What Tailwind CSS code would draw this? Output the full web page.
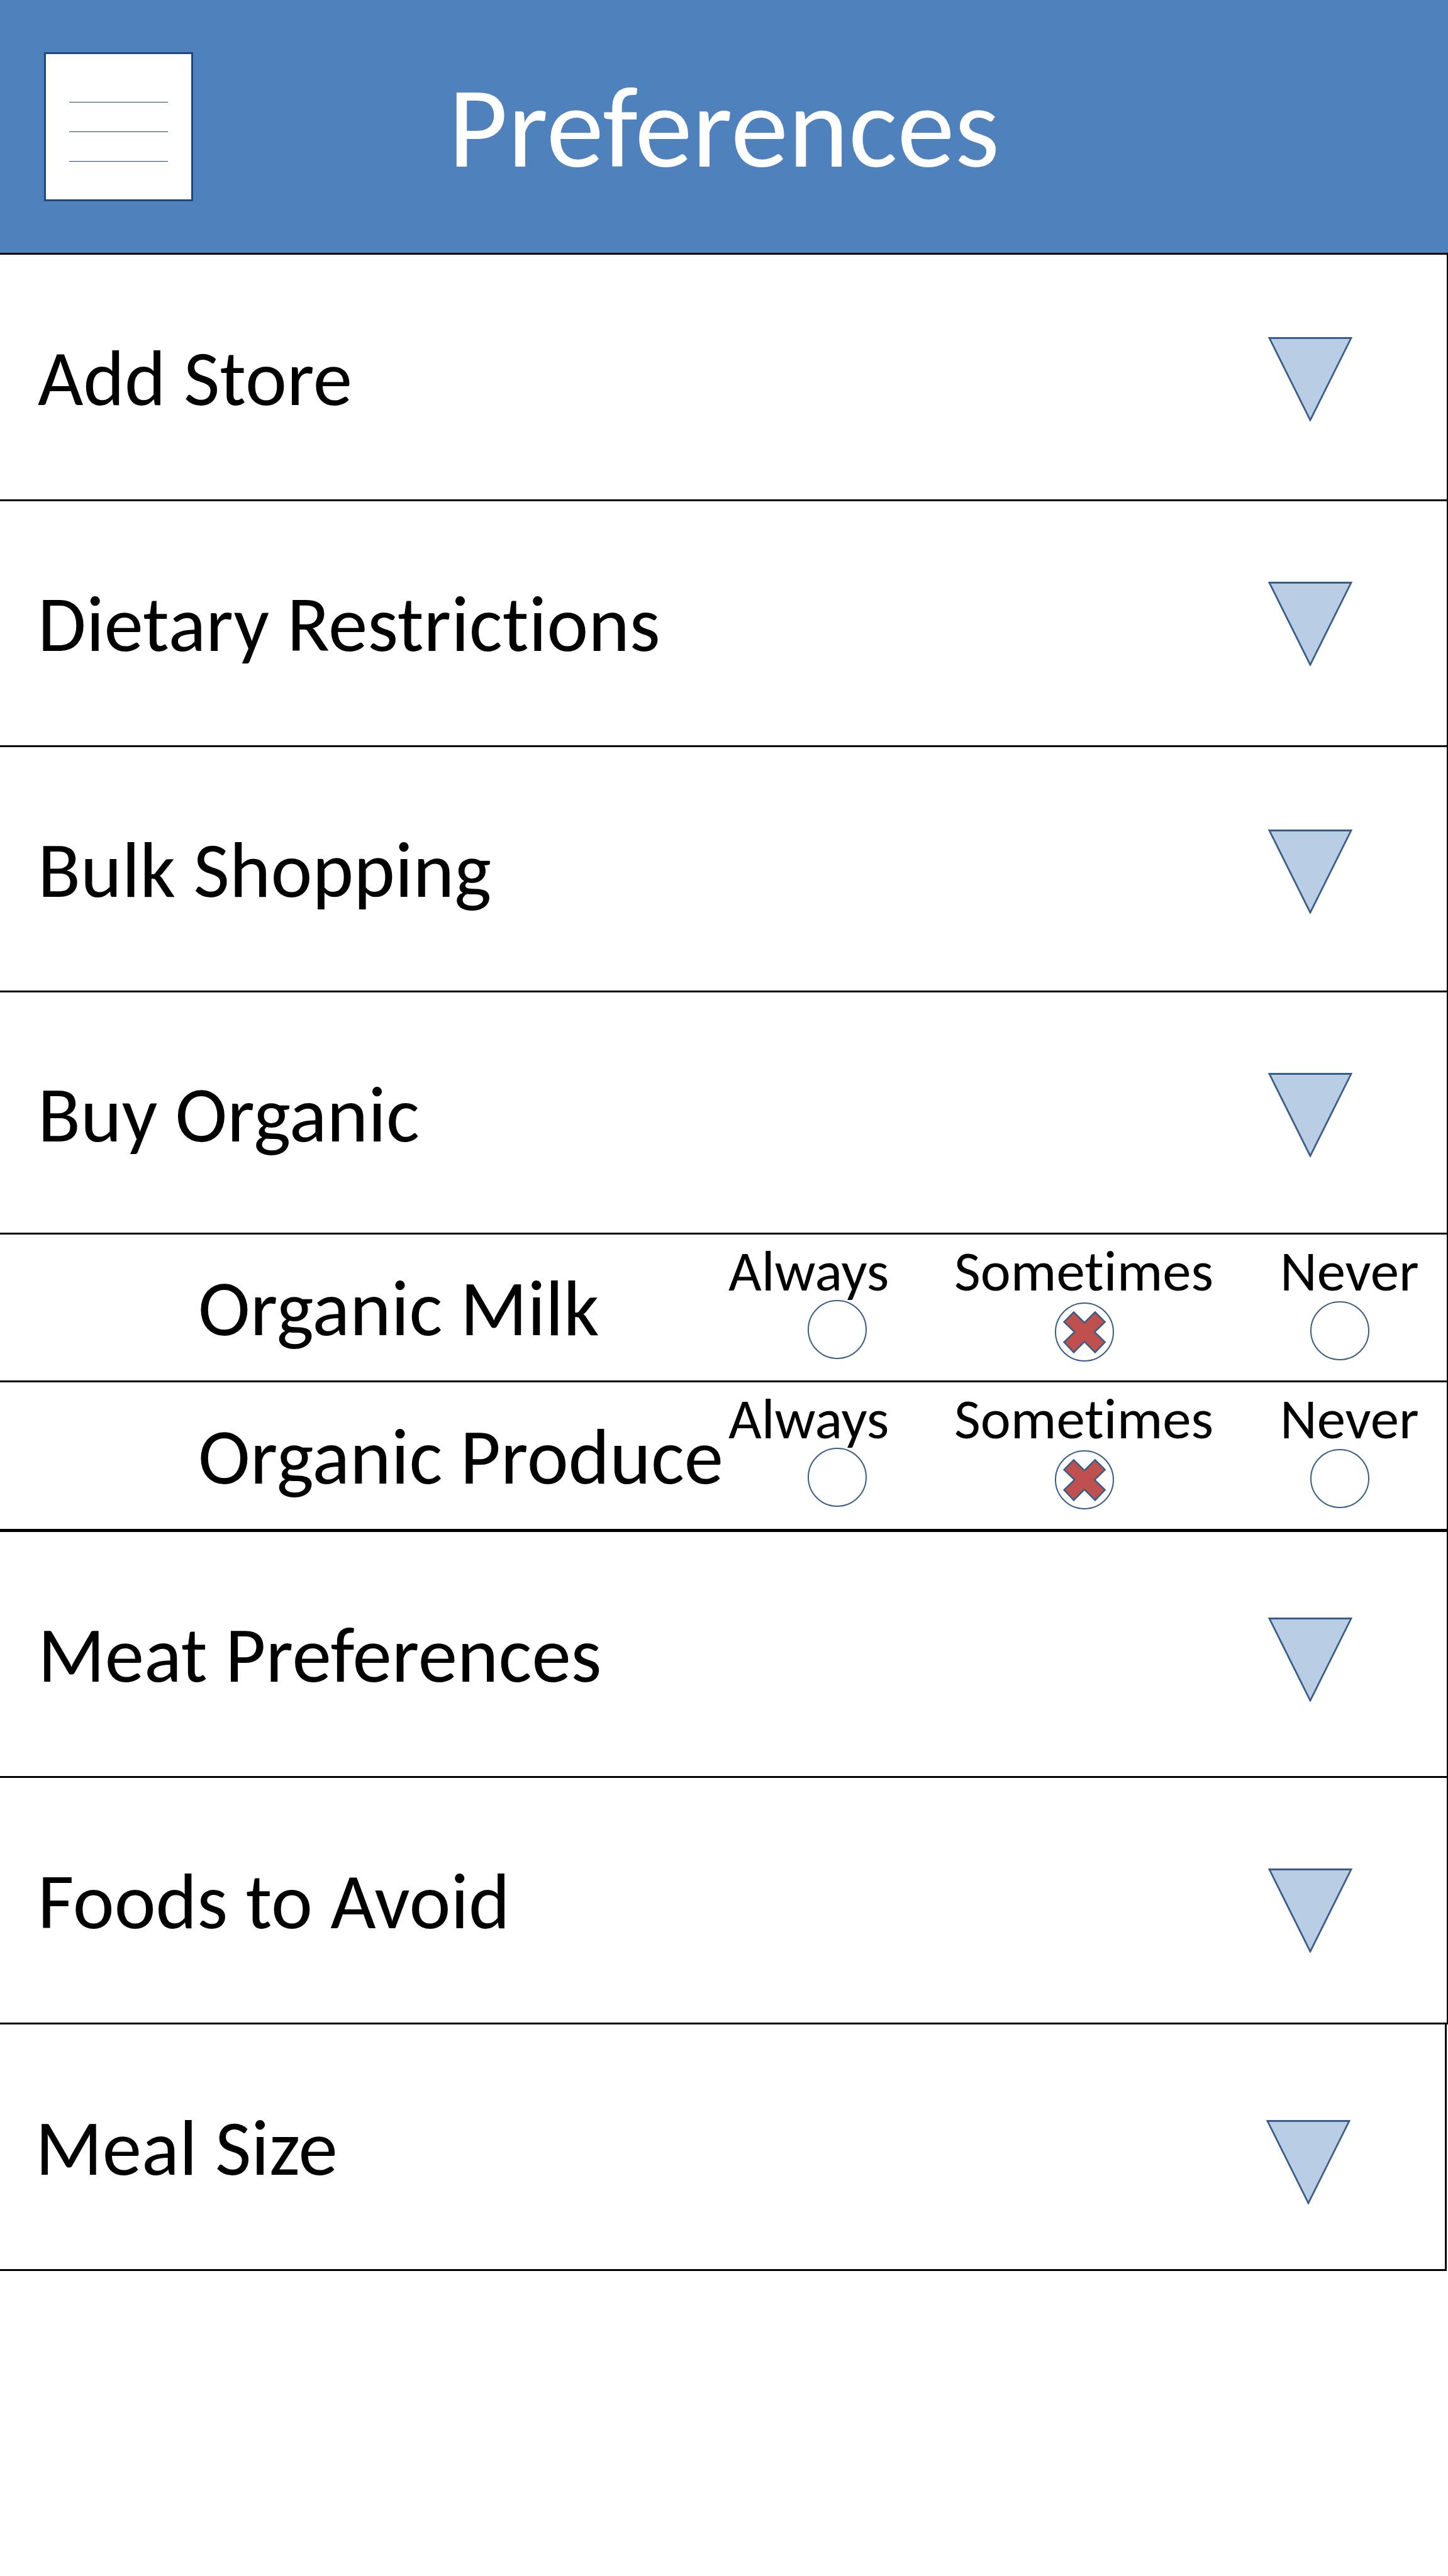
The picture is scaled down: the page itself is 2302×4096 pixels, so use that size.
<!DOCTYPE html>
<html lang="en">
<head>
<meta charset="utf-8">
<meta name="viewport" content="width=device-width, initial-scale=1">
<title>Preferences</title>
<script src="https://cdn.jsdelivr.net/npm/@tailwindcss/browser@4"></script>
</head>
<body class="min-h-screen bg-white font-[Carlito,Calibri,Lato,sans-serif] text-[125px] leading-[152px] text-black [font-variant-ligatures:none]">

<svg class="hidden" aria-hidden="true">
  <symbol id="arrow" viewBox="0 0 134 134">
    <path d="M2 1.5H132L67 132Z" fill="#b9cde5" stroke="#385d8a" stroke-width="2.8"/>
  </symbol>
  <symbol id="cross" viewBox="250 61 312 312">
    <path d="M352 116L406 170L460 116L510 166L457 217L510 268L460 320L406 266L352 320L303 268L356 217L303 166Z" fill="#c0504d" stroke="#385d8a" stroke-width="8"/>
  </symbol>
</svg>

<header class="grid min-h-[405px] grid-cols-[1fr_auto_1fr] items-center border-b-3 border-black bg-[#4f81bd] px-[70px]">
  <button type="button" aria-label="Menu" class="flex size-[237px] flex-col items-center justify-center gap-[46px] border-3 border-[#1f497d] bg-white pt-4">
    <span class="h-px w-[157px] bg-[#1f497d]"></span>
    <span class="h-px w-[157px] bg-[#1f497d]"></span>
    <span class="h-px w-[157px] bg-[#1f497d]"></span>
  </button>
  <h1 class="pt-1 text-[183px] leading-[224px] text-white">Preferences</h1>
</header>

<main>
  <button type="button" class="flex min-h-[392px] w-full items-center justify-between border-r-2 border-b-3 border-black pr-[150px] pl-[60px] text-left">
    <span class="pt-1">Add Store</span>
    <svg class="mt-[131px] size-[134px] self-start" aria-hidden="true"><use href="#arrow"/></svg>
  </button>
  <button type="button" class="flex min-h-[391px] w-full items-center justify-between border-r-2 border-b-3 border-black pr-[150px] pl-[60px] text-left">
    <span class="pt-1">Dietary Restrictions</span>
    <svg class="mt-32 size-[134px] self-start" aria-hidden="true"><use href="#arrow"/></svg>
  </button>
  <button type="button" class="flex min-h-[390px] w-full items-center justify-between border-r-2 border-b-3 border-black pr-[150px] pl-[60px] text-left">
    <span class="pt-1">Bulk Shopping</span>
    <svg class="mt-[131px] size-[134px] self-start" aria-hidden="true"><use href="#arrow"/></svg>
  </button>

  <section>
    <button type="button" aria-expanded="true" class="flex min-h-[385px] w-full items-center justify-between border-r-2 border-b-3 border-black pr-[150px] pl-[60px] text-left">
      <span class="pt-2">Buy Organic</span>
      <svg class="mt-32 size-[134px] self-start" aria-hidden="true"><use href="#arrow"/></svg>
    </button>

    <div role="radiogroup" aria-labelledby="milk" class="grid min-h-[235px] grid-cols-[minmax(0,1158fr)_minmax(0,359fr)_minmax(0,518fr)_minmax(0,265fr)] border-r-2 border-b-3 border-black">
      <span id="milk" class="self-center pt-1 pl-[315px] whitespace-nowrap">Organic Milk</span>
      <label class="flex flex-col items-start pt-3 text-[91px] leading-[92px]">Always
        <input type="radio" name="milk" value="always" class="ml-[126px] size-[94px] appearance-none rounded-full border-2 border-[#385d8a]">
      </label>
      <label class="flex flex-col items-start pt-3 text-[91px] leading-[92px]">Sometimes
        <span class="mt-0.5 ml-[158px] grid place-items-center">
          <input type="radio" name="milk" value="sometimes" checked class="peer size-[94px] appearance-none rounded-full border-2 border-[#385d8a] [grid-area:1/1]">
          <svg class="pointer-events-none hidden size-[98px] [grid-area:1/1] peer-checked:block" aria-hidden="true"><use href="#cross"/></svg>
        </span>
      </label>
      <label class="flex flex-col items-start pt-3 text-[91px] leading-[92px]">Never
        <input type="radio" name="milk" value="never" class="mt-0.5 ml-12 size-[94px] appearance-none rounded-full border-2 border-[#385d8a]">
      </label>
    </div>

    <div role="radiogroup" aria-labelledby="produce" class="grid min-h-[238px] grid-cols-[minmax(0,1158fr)_minmax(0,359fr)_minmax(0,518fr)_minmax(0,265fr)] border-r-2 border-b-5 border-black">
      <span id="produce" class="self-center pt-1 pl-[315px] whitespace-nowrap">Organic Produce</span>
      <label class="flex flex-col items-start pt-3 text-[91px] leading-[92px]">Always
        <input type="radio" name="produce" value="always" class="ml-[126px] size-[94px] appearance-none rounded-full border-2 border-[#385d8a]">
      </label>
      <label class="flex flex-col items-start pt-3 text-[91px] leading-[92px]">Sometimes
        <span class="mt-0.5 ml-[158px] grid place-items-center">
          <input type="radio" name="produce" value="sometimes" checked class="peer size-[94px] appearance-none rounded-full border-2 border-[#385d8a] [grid-area:1/1]">
          <svg class="pointer-events-none hidden size-[98px] [grid-area:1/1] peer-checked:block" aria-hidden="true"><use href="#cross"/></svg>
        </span>
      </label>
      <label class="flex flex-col items-start pt-3 text-[91px] leading-[92px]">Never
        <input type="radio" name="produce" value="never" class="mt-0.5 ml-12 size-[94px] appearance-none rounded-full border-2 border-[#385d8a]">
      </label>
    </div>
  </section>

  <button type="button" class="flex min-h-[391px] w-full items-center justify-between border-r-2 border-b-3 border-black pr-[150px] pl-[60px] text-left">
    <span class="pt-1">Meat Preferences</span>
    <svg class="mt-34 size-[134px] self-start" aria-hidden="true"><use href="#arrow"/></svg>
  </button>
  <button type="button" class="flex min-h-[392px] w-full items-center justify-between border-r-2 border-b-3 border-black pr-[150px] pl-[60px] text-left">
    <span class="pt-1">Foods to Avoid</span>
    <svg class="mt-36 size-[134px] self-start" aria-hidden="true"><use href="#arrow"/></svg>
  </button>
  <div class="pr-0.5">
    <button type="button" class="flex min-h-[392px] w-full items-center justify-between border-r-3 border-b-3 border-black pr-[150px] pl-14 text-left">
      <span class="pt-1">Meal Size</span>
      <svg class="mt-38 size-[134px] self-start" aria-hidden="true"><use href="#arrow"/></svg>
    </button>
  </div>
</main>
</body>
</html>
